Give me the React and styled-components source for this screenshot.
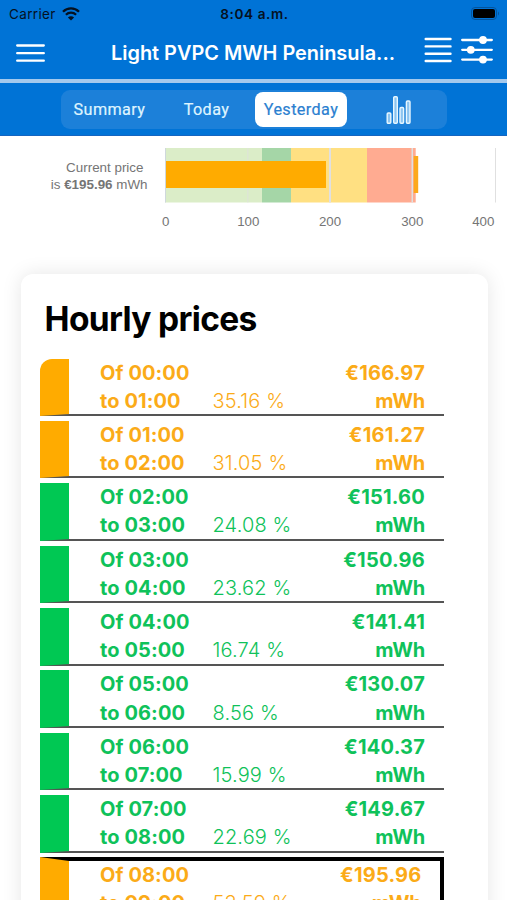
import React from "react";
import styled, { createGlobalStyle } from "styled-components";

const ORANGE = "#ffab00";
const GREEN = "#00c853";

const hours = [
  { from: "00:00", to: "01:00", percent: "35.16", price: "166.97" },
  { from: "01:00", to: "02:00", percent: "31.05", price: "161.27" },
  { from: "02:00", to: "03:00", percent: "24.08", price: "151.60", low: true },
  { from: "03:00", to: "04:00", percent: "23.62", price: "150.96", low: true },
  { from: "04:00", to: "05:00", percent: "16.74", price: "141.41", low: true },
  { from: "05:00", to: "06:00", percent: "8.56", price: "130.07", low: true },
  { from: "06:00", to: "07:00", percent: "15.99", price: "140.37", low: true },
  { from: "07:00", to: "08:00", percent: "22.69", price: "149.67", low: true },
  { from: "08:00", to: "09:00", percent: "53.59", price: "195.96", current: true },
];

export default function App() {
  return (
    <React.Fragment>
      <GlobalStyle />
      <Screen>
        <Header>
          <StatusBar>
            <Carrier>
              Carrier
              <WifiIcon />
            </Carrier>
            <Clock>8:04 a.m.</Clock>
            <BatteryIcon />
          </StatusBar>
          <NavBar>
            <MenuIcon />
            <NavTitle>Light PVPC MWH Peninsula...</NavTitle>
            <NavActions>
              <ListIcon />
              <SlidersIcon />
            </NavActions>
          </NavBar>
        </Header>
        <TabBar>
          <Segments>
            <Segment $width={97}>Summary</Segment>
            <Divider />
            <Segment $width={97}>Today</Segment>
            <Segment $width={92} $active>
              Yesterday
            </Segment>
            <Segment $width={103}>
              <BarsIcon />
            </Segment>
          </Segments>
        </TabBar>
        <ChartSection>
          <ChartLabel>
            <LabelTop>Current price</LabelTop>
            <div>
              is <b>€195.96</b> mWh
            </div>
          </ChartLabel>
          <PriceChart />
        </ChartSection>
        <Card>
          <CardTitle>Hourly prices</CardTitle>
          <HourList>
            {hours.map((hour, i) => (
              <HourRow
                key={hour.from}
                $color={hour.low ? GREEN : ORANGE}
                $first={i === 0}
                $current={hour.current}
              >
                <Time>
                  Of {hour.from}
                  <br />
                  to {hour.to}
                </Time>
                <Percent>{hour.percent} %</Percent>
                <Price>
                  €{hour.price}
                  <br />
                  <Unit>mWh</Unit>
                </Price>
              </HourRow>
            ))}
          </HourList>
        </Card>
      </Screen>
    </React.Fragment>
  );
}

function WifiIcon() {
  return (
    <svg width="18" height="14" viewBox="0 0 18 14" fill="none" stroke="#05111f">
      <path d="M1 4.700C5.500.2 12.500.2 17 4.700" strokeWidth="2.300" />
      <path d="M3.900 7.800c2.900-2.900 7.300-2.900 10.200 0" strokeWidth="2.200" />
      <path d="M9 13.600 5.900 10.400c1.800-1.700 4.400-1.700 6.200 0z" fill="#05111f" stroke="none" />
    </svg>
  );
}

function BatteryIcon() {
  return (
    <svg width="29" height="14" viewBox="0 0 29 14">
      <rect x="0.500" y="0.500" width="25" height="12" rx="3.500" fill="none" stroke="#04549c" />
      <rect x="2" y="2" width="22" height="9" rx="2" fill="#000" />
      <path d="M27 4.500v4c1.300-.5 1.300-3.500 0-4z" fill="#04549c" />
    </svg>
  );
}

function MenuIcon() {
  return (
    <svg width="29" height="20" viewBox="0 0 29 20" stroke="#fff" strokeWidth="2.300" strokeLinecap="round">
      <path d="M1.200 2.500h26.600M1.200 10.200h26.600M1.200 17.700h26.600" />
    </svg>
  );
}

function ListIcon() {
  return (
    <svg width="28" height="28" viewBox="0 0 28 28" stroke="#fff" strokeWidth="2.400" strokeLinecap="round">
      <path d="M1.700 3h24.800M1.700 10.400h24.800M1.700 17.700h24.800M1.700 25h24.800" />
    </svg>
  );
}

function SlidersIcon() {
  return (
    <svg width="32" height="28" viewBox="0 0 32 28" fill="#fff">
      <path d="M1.200 4h29.600M1.200 13.800h29.600M1.200 23.600h29.600" stroke="#fff" strokeWidth="2.300" strokeLinecap="round" />
      <circle cx="22" cy="4" r="3.900" />
      <circle cx="9.800" cy="13.800" r="3.900" />
      <circle cx="22" cy="23.600" r="3.900" />
    </svg>
  );
}

function BarsIcon() {
  return (
    <svg width="26" height="30" viewBox="0 0 26 30" fill="#8cc4f0" stroke="#e8f7ff" strokeWidth="1.400">
      <rect x="1.200" y="18" width="3.600" height="10.300" rx="1" />
      <rect x="7.700" y="1.700" width="3.600" height="26.600" rx="1" />
      <rect x="14" y="12.500" width="3.600" height="15.800" rx="1" />
      <rect x="20.400" y="6" width="3.600" height="22.300" rx="1" />
    </svg>
  );
}

function PriceChart() {
  return (
    <svg width="352" height="90" viewBox="0 0 352 90">
      <rect x="10" width="97" height="54.500" fill="#dbedc8" />
      <rect x="107" width="29" height="54.500" fill="#a5d6a7" />
      <rect x="136" width="76" height="54.500" fill="#ffe082" />
      <rect x="212" width="48.700" height="54.500" fill="#ffab91" />
      <g fill="#e0e0e0">
        <rect x="10" width="1" height="54.500" fill="#cfd8dc" />
        <rect x="92" width="1.500" height="54.500" opacity="0.500" />
        <rect x="174" width="2" height="54.500" />
        <rect x="256.500" width="1.500" height="54.500" />
        <rect x="340" width="1" height="54.500" />
      </g>
      <rect x="11" y="13" width="160" height="27" fill={ORANGE} />
      <rect x="258.700" y="8" width="4.500" height="37" fill="#fca91c" />
      <AxisText x="10.700" y="77.500">0</AxisText>
      <AxisText x="93.300" y="77.500">100</AxisText>
      <AxisText x="175" y="77.500">200</AxisText>
      <AxisText x="257.300" y="77.500">300</AxisText>
      <AxisText x="328.300" y="77.500">400</AxisText>
    </svg>
  );
}

const GlobalStyle = createGlobalStyle`
  * {
    box-sizing: border-box;
  }

  body {
    margin: 0;
    background: #fff;
  }

  svg {
    display: block;
    flex: none;
  }
`;

const Screen = styled.div`
  display: flex;
  flex-direction: column;
  height: 900px;
  overflow: hidden;
  background: #fff;
  font-family: Inter, "Liberation Sans", sans-serif;
`;

const Header = styled.header`
  flex: none;
  height: 83px;
  background: #0073d6;
  border-bottom: 4px solid #a4c9ed;
`;

const StatusBar = styled.div`
  display: grid;
  grid-template-columns: 1fr auto 1fr;
  align-items: center;
  height: 27px;
  padding: 0 7px 0 9px;
  color: #05111f;

  > svg {
    justify-self: end;
  }
`;

const Carrier = styled.div`
  display: flex;
  align-items: center;
  gap: 6px;
  font-size: 13.500px;
  letter-spacing: 0.350px;
`;

const Clock = styled.div`
  font-size: 13.600px;
  font-weight: 600;
  letter-spacing: 0.600px;
`;

const NavBar = styled.div`
  display: flex;
  align-items: center;
  height: 52px;
  padding: 0 14px 0 16px;
`;

const NavTitle = styled.div`
  width: 286px;
  margin: 0 27px 0 66px;
  color: #fff;
  font-size: 19.900px;
  font-weight: 600;
  white-space: nowrap;
`;

const NavActions = styled.div`
  display: flex;
  align-items: center;
  gap: 9px;
  padding-bottom: 6px;
`;

const TabBar = styled.nav`
  display: flex;
  flex: none;
  height: 53px;
  padding: 7px 0 0 61px;
  background: #0073d6;
  border-bottom: 1px solid #1565c0;
`;

const Segments = styled.div`
  display: flex;
  align-items: center;
  width: 386px;
  height: 39px;
  border-radius: 9px;
  background: #1c80d9;
`;

const Segment = styled.div`
  display: flex;
  flex: none;
  align-items: center;
  justify-content: center;
  width: ${(props) => props.$width}px;
  height: 35px;
  border-radius: 8px;
  background: ${(props) => (props.$active ? "#fff" : "none")};
  color: ${(props) => (props.$active ? "#2b7fd0" : "#dff4ff")};
  font-family: Roboto, sans-serif;
  font-size: 16.200px;
  font-weight: 400;
  letter-spacing: 0.400px;
  -webkit-text-stroke: 0.200px currentColor;
`;

const Divider = styled.div`
  width: 1px;
  height: 21px;
  background: #1674c9;
`;

const ChartSection = styled.section`
  display: flex;
  flex: none;
  height: 138px;
  padding-top: 12px;
`;

const ChartLabel = styled.div`
  width: 155px;
  padding: 11px 7.500px 0 0;
  color: #757575;
  font-family: "Liberation Sans", sans-serif;
  font-size: 13.400px;
  line-height: 17px;
  text-align: right;
  white-space: nowrap;
`;

const LabelTop = styled.div`
  padding-right: 4px;
`;

const AxisText = styled.text`
  fill: #757575;
  font-family: "Liberation Sans", sans-serif;
  font-size: 13.300px;
  text-anchor: middle;
`;

const Card = styled.section`
  flex: none;
  width: 467px;
  height: 700px;
  margin-left: 20.500px;
  border-radius: 12px;
  background: #fff;
  box-shadow: 0 0 20px rgba(0, 0, 0, 0.1);
`;

const CardTitle = styled.h1`
  margin: 0;
  padding: 25px 0 0 24px;
  font-size: 33.500px;
  font-weight: 700;
  letter-spacing: -0.650px;
  line-height: 40px;
`;

const HourList = styled.div`
  display: flex;
  flex-direction: column;
  gap: 4.900px;
  width: 403.500px;
  margin: 19.500px 0 0 19.500px;
`;

const HourRow = styled.div`
  display: flex;
  height: ${(props) => (props.$current ? 63 : 57.5)}px;
  margin-top: ${(props) => (props.$current ? "-0.700px" : 0)};
  padding-right: ${(props) => (props.$current ? 18 : 18.5)}px;
  border: 0 solid #000;
  border-width: ${(props) => (props.$current ? "4px 4px 4px 29.5px" : "0 0 2px 29.5px")};
  border-color: ${(props) => (props.$current ? "#000" : "#555")};
  border-left-color: ${(props) => props.$color};
  border-top-left-radius: ${(props) => (props.$first ? "12px" : 0)};
  color: ${(props) => (props.$color === GREEN ? "#0fc25a" : "#fbab18")};
  font-size: 20px;
  line-height: 28.200px;
`;

const Time = styled.div`
  width: 113.500px;
  padding-left: 31px;
  font-weight: 700;
  letter-spacing: 0.100px;
  white-space: nowrap;
`;

const Percent = styled.div`
  padding: 28.200px 0 0 30px;
  font-weight: 350;
  letter-spacing: 0.150px;
  white-space: nowrap;
`;

const Price = styled.div`
  flex: 1;
  font-weight: 700;
  letter-spacing: 0.200px;
  text-align: right;
`;

const Unit = styled.span`
  letter-spacing: -0.200px;
`;
